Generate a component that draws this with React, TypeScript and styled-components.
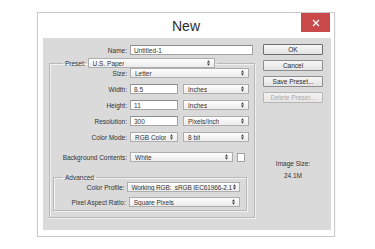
import React from 'react';
import styled, { createGlobalStyle } from 'styled-components';

const GlobalStyle = createGlobalStyle`
  html, body {
    margin: 0;
    padding: 0;
    background: #fff;
  }

  body {
    font-family: "Liberation Sans", Arial, sans-serif;
    color: #333;
  }
`;

const Dialog = styled.div`
  box-sizing: border-box;
  margin: 12px 0 0 37px;
  width: 298px;
  height: 225px;
  border: 1px solid #cbcbcb;
  background: #fff;
  box-shadow: 0 1px 2px rgba(0, 0, 0, 0.1);
  display: flex;
  flex-direction: column;
`;

const TitleBar = styled.div`
  height: 25px;
  display: grid;
  grid-template-columns: 1fr auto 1fr;
  align-items: start;
`;

const Title = styled.h1`
  grid-column: 2;
  margin: 0;
  font-size: 14px;
  font-weight: normal;
  line-height: 26px;
  color: #2b2b2b;
`;

const CloseButton = styled.button`
  grid-column: 3;
  justify-self: end;
  width: 29px;
  height: 19px;
  margin-right: 4px;
  padding: 0;
  border: none;
  background: #c9494b;
  display: flex;
  align-items: center;
  justify-content: center;
`;

const Body = styled.div`
  flex: 1;
  display: flex;
  margin: 0 3px 6px 5px;
  padding: 6px 7px 5px 6px;
  background: #dadada;
  font-size: 6.5px;
`;

const LeftColumn = styled.div`
  width: 206px;
  display: flex;
  flex-direction: column;
`;

const Row = styled.div<{ $labelWidth: number; $top?: number }>`
  display: flex;
  align-items: center;
  gap: 3px;
  height: 10px;
  margin-top: ${(p) => p.$top ?? 0}px;

  & > label {
    width: ${(p) => p.$labelWidth}px;
    text-align: right;
    white-space: nowrap;
  }
`;

const Controls = styled.div`
  display: flex;
  align-items: center;
  gap: 5px;
`;

const TextInput = styled.input<{ $width: number }>`
  box-sizing: border-box;
  width: ${(p) => p.$width}px;
  height: 10px;
  margin: 0;
  padding: 0 3px;
  border: 1px solid #a3a3a3;
  border-top-color: #8c8c8c;
  background: #fff;
  font: inherit;
  color: #333;
  outline: none;
`;

const SelectBox = styled.div<{ $width: number; $dense?: boolean }>`
  box-sizing: border-box;
  width: ${(p) => p.$width}px;
  height: 10px;
  padding: 0 ${(p) => (p.$dense ? 3 : 4)}px;
  border: 1px solid #adadad;
  background: linear-gradient(#fdfdfd, #ececec);
  display: flex;
  align-items: center;
  justify-content: space-between;
  gap: 1px;
  letter-spacing: ${(p) => (p.$dense ? '-0.12px' : 'normal')};

  & > span {
    white-space: pre;
    overflow: hidden;
  }
`;

const Swatch = styled.div`
  box-sizing: border-box;
  width: 8px;
  height: 9px;
  margin-left: -1px;
  border: 1px solid #a3a3a3;
  background: #fff;
`;

const Group = styled.fieldset<{ $inset?: number }>`
  min-width: 0;
  margin: ${(p) => (p.$inset ? `4px ${p.$inset}px 3px ${p.$inset}px` : '3px 0 0 0')};
  padding: 0 ${(p) => (p.$inset ? 6 : 4)}px 3px 0;
  border: 1px solid #b8b8b8;
  box-shadow: inset 1px 1px 0 #f1f1f1, 1px 1px 0 #f1f1f1;
  display: flex;
  flex-direction: column;
  gap: ${(p) => (p.$inset ? 5 : 6)}px;
`;

const Legend = styled.legend<{ $offset: number }>`
  margin-left: ${(p) => p.$offset}px;
  padding: 0 2px;
`;

const LegendInner = styled.span`
  display: flex;
  align-items: center;
  gap: 2px;
  height: 10px;
`;

const RightColumn = styled.div`
  width: 60px;
  margin-left: 8px;
  display: flex;
  flex-direction: column;
  gap: 5px;
`;

const Button = styled.button<{ $primary?: boolean }>`
  box-sizing: border-box;
  height: 11px;
  margin: 0;
  padding: 0;
  border: 1px solid ${(p) => (p.$primary ? '#6e6e6e' : '#8e8e8e')};
  border-radius: 1px;
  background: linear-gradient(#f7f7f7, #e3e3e3);
  font: inherit;
  color: #2a2a2a;
  line-height: 9px;

  &:disabled {
    border-color: #b6b6b6;
    color: #a9a9a9;
    background: linear-gradient(#f2f2f2, #e6e6e6);
  }
`;

const ImageSize = styled.div`
  margin-top: 52px;
  display: flex;
  flex-direction: column;
  align-items: center;
  gap: 4px;
  line-height: 8px;
`;

function Arrows() {
  return (
    <svg width="3" height="6" viewBox="0 0 3 6" style={{ flexShrink: 0 }}>
      <path d="M0 2.4 L1.5 0.2 L3 2.4 Z M0 3.6 L3 3.6 L1.5 5.8 Z" fill="#3a3a3a" />
    </svg>
  );
}

type SelectProps = { value: string; width: number; dense?: boolean };

function Select({ value, width, dense }: SelectProps) {
  return (
    <SelectBox $width={width} $dense={dense}>
      <span>{value}</span>
      <Arrows />
    </SelectBox>
  );
}

function App() {
  return (
    <>
      <GlobalStyle />
      <Dialog>
        <TitleBar>
          <Title>New</Title>
          <CloseButton type="button" aria-label="Close">
            <svg width="8" height="8" viewBox="0 0 8 8">
              <path d="M1 1 L7 7 M7 1 L1 7" stroke="#fff" strokeWidth="1.3" />
            </svg>
          </CloseButton>
        </TitleBar>
        <Body>
          <LeftColumn>
            <Row $labelWidth={78} $top={1}>
              <label>Name:</label>
              <TextInput $width={123} readOnly defaultValue="Untitled-1" />
            </Row>
            <Group>
              <Legend $offset={13}>
                <LegendInner>
                  <label>Preset:</label>
                  <Select value="U.S. Paper" width={127} />
                </LegendInner>
              </Legend>
              <Row $labelWidth={77}>
                <label>Size:</label>
                <Select value="Letter" width={119} />
              </Row>
              <Row $labelWidth={77}>
                <label>Width:</label>
                <Controls>
                  <TextInput $width={48} readOnly defaultValue="8.5" />
                  <Select value="Inches" width={66} />
                </Controls>
              </Row>
              <Row $labelWidth={77}>
                <label>Height:</label>
                <Controls>
                  <TextInput $width={48} readOnly defaultValue="11" />
                  <Select value="Inches" width={66} />
                </Controls>
              </Row>
              <Row $labelWidth={77}>
                <label>Resolution:</label>
                <Controls>
                  <TextInput $width={48} readOnly defaultValue="300" />
                  <Select value="Pixels/Inch" width={66} />
                </Controls>
              </Row>
              <Row $labelWidth={77}>
                <label>Color Mode:</label>
                <Controls>
                  <Select value="RGB Color" width={48} />
                  <Select value="8 bit" width={66} />
                </Controls>
              </Row>
              <Row $labelWidth={77} $top={4}>
                <label>Background Contents:</label>
                <Controls>
                  <Select value="White" width={103} />
                  <Swatch />
                </Controls>
              </Row>
              <Group $inset={3}>
                <Legend $offset={9}>
                  <LegendInner>Advanced</LegendInner>
                </Legend>
                <Row $labelWidth={73}>
                  <label>Color Profile:</label>
                  <Select value="Working RGB:  sRGB IEC61966-2.1" width={113} dense />
                </Row>
                <Row $labelWidth={73}>
                  <label>Pixel Aspect Ratio:</label>
                  <Select value="Square Pixels" width={113} />
                </Row>
              </Group>
            </Group>
          </LeftColumn>
          <RightColumn>
            <Button type="button" $primary>OK</Button>
            <Button type="button">Cancel</Button>
            <Button type="button">Save Preset...</Button>
            <Button type="button" disabled>Delete Preset...</Button>
            <ImageSize>
              <span>Image Size:</span>
              <span>24.1M</span>
            </ImageSize>
          </RightColumn>
        </Body>
      </Dialog>
    </>
  );
}

export default App;
